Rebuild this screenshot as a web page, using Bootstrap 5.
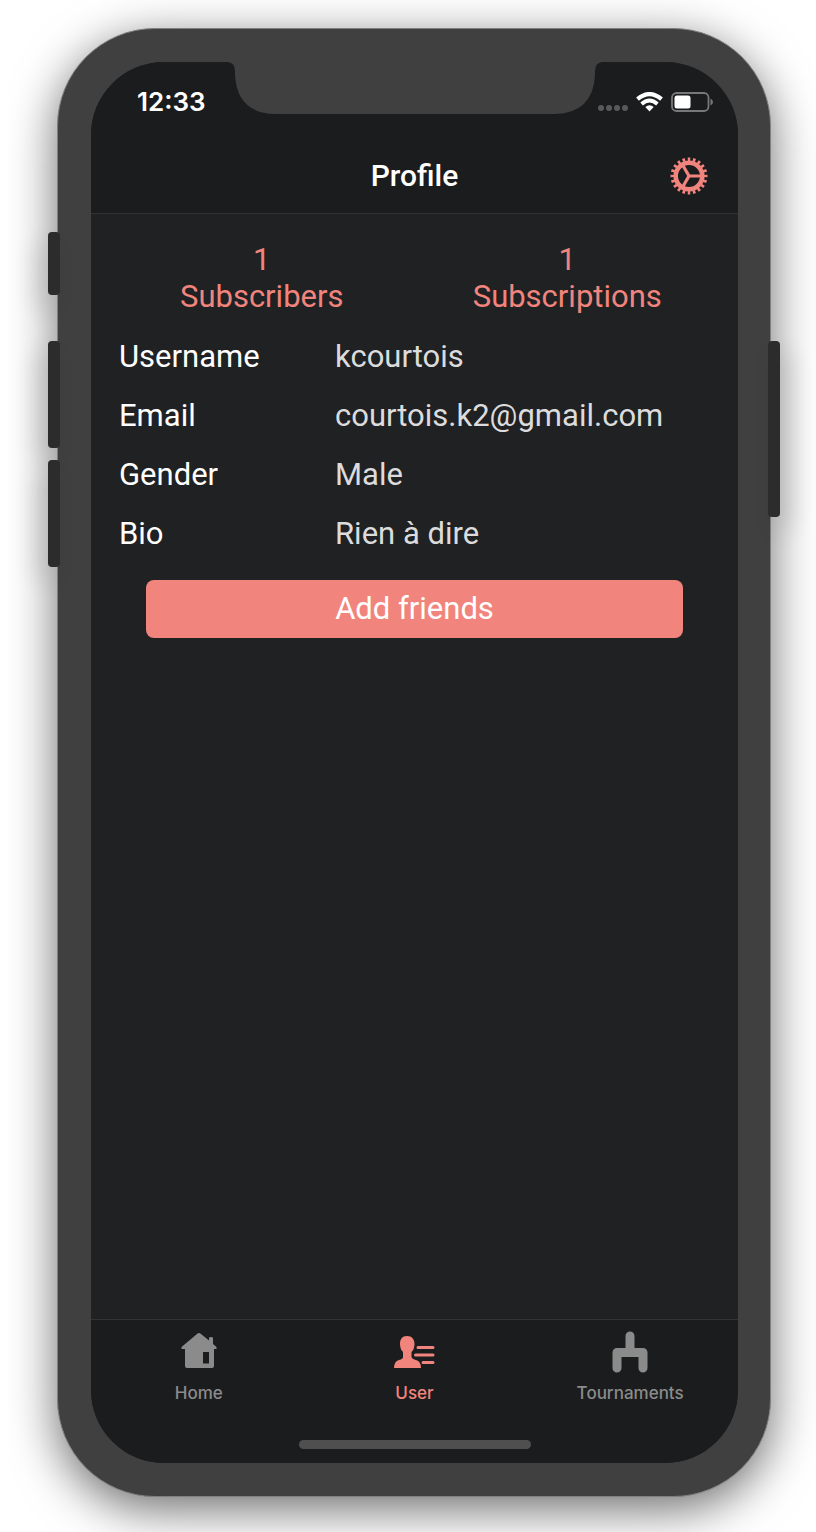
<!DOCTYPE html>
<html lang="en">
<head>
<meta charset="utf-8">
<meta name="viewport" content="width=device-width, initial-scale=1">
<title>Profile</title>
<link href="https://cdn.jsdelivr.net/npm/bootstrap@5.3.0/dist/css/bootstrap.min.css" rel="stylesheet">
<style>
  :root { --accent: #f1857d; --bar: #1b1c1d; --screen: #202123; --frame: #404040; --edge: #2c2c2c; }
  body { background: #fff; font-family: Roboto, "Liberation Sans", sans-serif; }
  .stage { margin-left: 8px; padding: 28px 45px 35px 49px; overflow: hidden; isolation: isolate; }
  .phone { position: relative; padding: 33px 32px 33px 33px; background: var(--frame); border: 1px solid #808080; border-radius: 98px;
    box-shadow: 0 12px 48px rgba(0,0,0,.58); }
  .side-key { position: absolute; width: 12px; background: var(--edge); border-radius: 4px; }
  .key-left { left: -10px; box-shadow: -10px 12px 24px rgba(0,0,0,.16); }
  .key-right { right: -10px; box-shadow: 10px 12px 24px rgba(0,0,0,.16); }
  .key-mute { top: 203px; height: 63px; }
  .key-up { top: 312px; height: 107px; }
  .key-down { top: 431px; height: 107px; }
  .key-power { top: 312px; height: 176px; }
  .phone-screen { position: relative; background: var(--screen); border-radius: 73px; overflow: hidden; }
  .notch { position: absolute; top: 0; left: 50%; margin-left: -187px; }
  .top-bar { background: var(--bar); border-bottom: 1px solid #323335; }
  .status-row { height: 76px; padding: 3px 25px 0 46px; }
  .clock { font: 600 26px/32px Inter, sans-serif; }
  .title-row { height: 75px; padding: 0 30px; display: grid; grid-template-columns: 1fr auto 1fr; }
  .screen-title { font-size: 30px; line-height: 36px; font-weight: 500; }
  .icon-btn { color: var(--accent); background: none; border: 0; line-height: 0; }
  .stats { padding: 27px 18px 0; font-size: 31px; line-height: 37px; }
  .stats a { color: var(--accent); }
  .details { padding: 12px 28px 0; font-size: 31px; line-height: 59px; }
  .details > div { display: grid; grid-template-columns: 216px 1fr; }
  .details dt { font-weight: 400; }
  .details dd { color: #dcdcdd; }
  .add-area { padding: 17px 55px 0; }
  .btn-add { --bs-btn-bg: var(--accent); --bs-btn-color: #fff; --bs-btn-hover-bg: #e5766e; --bs-btn-hover-color: #fff;
    --bs-btn-border-width: 0; --bs-btn-border-radius: 8px; --bs-btn-padding-y: 0; font-size: 31px; line-height: 58px; }
  .tab-bar { background: var(--bar); border-top: 1px solid #323335; }
  .tab-bar a { color: #8b8b8b; padding-top: 11px; font: 500 17px/24px Inter, sans-serif; }
  .tab-bar a.active { color: var(--accent); }
  .tab-bar svg { margin-bottom: 6px; }
  .home-pill { width: 232px; height: 9px; background: #4f4f50; margin: 35px auto 14px; }
</style>
</head>
<body>
<main class="stage min-vh-100 d-flex">
  <div class="phone flex-grow-1 d-flex">
    <span class="side-key key-left key-mute"></span>
    <span class="side-key key-left key-up"></span>
    <span class="side-key key-left key-down"></span>
    <span class="side-key key-right key-power"></span>
    <div class="phone-screen flex-grow-1 d-flex flex-column text-white">
      <header class="top-bar">
        <div class="status-row d-flex align-items-center justify-content-between">
          <span class="clock">12:33</span>
          <span class="d-flex align-items-center gap-2">
            <svg width="30" height="20" viewBox="0 0 30 20" fill="#58595a"><circle cx="3" cy="16" r="3"/><circle cx="11" cy="16" r="3"/><circle cx="19" cy="16" r="3"/><circle cx="27" cy="16" r="3"/></svg>
            <svg width="27" height="20" viewBox="0 0 27 20" fill="none" stroke="#fff"><path d="M1.500 7.200Q13.500-3 25.500 7.200" stroke-width="4.200"/><path d="M5.600 12Q13.500 5 21.400 12" stroke-width="3.800"/><path d="M9.300 15Q13.500 11.500 17.700 15L13.500 19.500Z" fill="#fff" stroke="none"/></svg>
            <svg width="42" height="20" viewBox="0 0 42 20"><rect x="1" y="1" width="36.500" height="18" rx="4.500" fill="none" stroke="#77787a" stroke-width="1.800"/><rect x="3.500" y="3.500" width="16" height="13" rx="2.500" fill="#fff"/><path d="M39.500 6.500Q42 8 42 10T39.500 13.500Z" fill="#77787a"/></svg>
          </span>
        </div>
        <div class="title-row align-items-center">
          <span></span>
          <h1 class="screen-title m-0">Profile</h1>
          <button type="button" class="icon-btn p-0 ms-auto" aria-label="Settings">
            <svg width="38" height="38" viewBox="0 0 38 38" fill="none" stroke="currentColor">
              <circle cx="19" cy="19" r="13.300" stroke-width="4.600"/>
              <circle cx="19" cy="19" r="16.700" stroke-width="3.600" pathLength="180" stroke-dasharray="4.400 4.600" stroke-dashoffset="2.200"/>
              <path d="M32 19H19L12.500 7.700M19 19L12.500 30.300" stroke-width="3.200"/>
            </svg>
          </button>
        </div>
      </header>
      <svg class="notch" width="374" height="52" viewBox="0 0 374 52" fill="#404040" aria-hidden="true"><path d="M0 0Q7 1 7 9V13Q9 51 47 52H327Q365 51 367 13V9Q367 1 374 0Z"/></svg>

      <section class="flex-grow-1">
        <nav class="stats d-flex text-center">
          <a href="#subscribers" class="col-6 text-decoration-none"><span class="d-block">1</span>Subscribers</a>
          <a href="#subscriptions" class="col-6 text-decoration-none"><span class="d-block">1</span>Subscriptions</a>
        </nav>
        <dl class="details mb-0">
          <div><dt>Username</dt><dd class="m-0">kcourtois</dd></div>
          <div><dt>Email</dt><dd class="m-0">courtois.k2@gmail.com</dd></div>
          <div><dt>Gender</dt><dd class="m-0">Male</dd></div>
          <div><dt>Bio</dt><dd class="m-0">Rien à dire</dd></div>
        </dl>
        <div class="add-area"><button type="button" class="btn btn-add w-100">Add friends</button></div>
      </section>

      <footer class="tab-bar">
        <nav class="d-flex text-center">
          <a href="#home" class="col-4 text-decoration-none">
            <svg class="d-block mx-auto" width="42" height="44" viewBox="0 0 42 44" fill="currentColor"><path fill-rule="evenodd" d="M21 2Q22 2 23 3L31 9.500V7Q31 6 33 6T35 7V13L38.500 16V18H36V35Q36 37 34 37H9Q7 37 7 35V18H3.500V16L19 3Q20 2 21 2ZM25 21V32.500H31V21Z"/></svg>
            Home
          </a>
          <a href="#user" class="col-4 text-decoration-none active" aria-current="page">
            <svg class="d-block mx-auto" width="42" height="44" viewBox="0 0 42 44" fill="currentColor"><path d="M14 5C19 5 21.500 8.500 21.500 13Q21.500 18 18.500 21V26Q19 28 23 29Q28 30.500 28 37H1Q1 30.500 6 29Q10 28 10 26V21Q7 18 7 13C7 8.500 9 5 14 5Z"/><path d="M25 16.500H40M22.500 24H40M30 31.500H40" stroke="currentColor" stroke-width="3" stroke-linecap="round"/></svg>
            User
          </a>
          <a href="#tournaments" class="col-4 text-decoration-none">
            <svg class="d-block mx-auto" width="42" height="44" viewBox="0 0 42 44" fill="none" stroke="currentColor" stroke-width="9" stroke-linecap="round" stroke-linejoin="round"><path d="M21 5V20M8 37V21.500H34V37"/></svg>
            Tournaments
          </a>
        </nav>
        <div class="home-pill rounded-pill"></div>
      </footer>
    </div>
  </div>
</main>
<script src="https://cdn.jsdelivr.net/npm/bootstrap@5.3.0/dist/js/bootstrap.bundle.min.js"></script>
</body>
</html>
